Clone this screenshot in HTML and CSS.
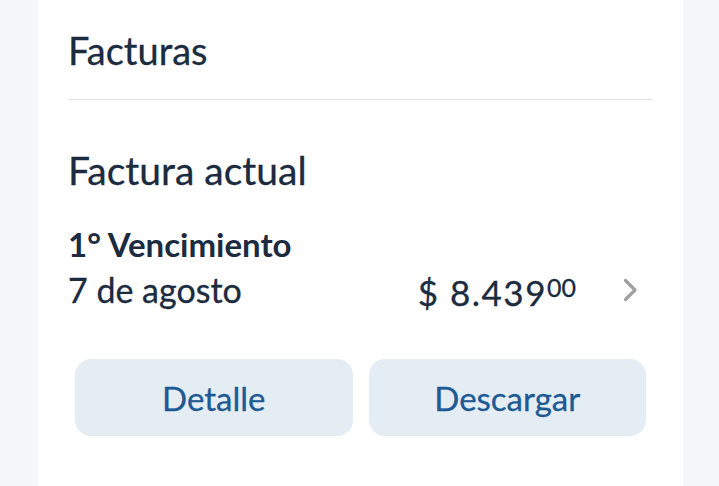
FILE: index.html
```html
<!DOCTYPE html>
<html lang="es">
<head>
    <meta charset="UTF-8">
    <meta name="viewport" content="width=device-width, initial-scale=1.0">
    <title>Facturas</title>
    <link rel="stylesheet" href="styles.css">
</head>
<body>
    <div class="card">
        <h1 class="title">Facturas</h1>
        <div class="divider"></div>

        <h2 class="subtitle">Factura actual</h2>
        <div class="due-label">1° Vencimiento</div>
        <div class="due-row">
            <span class="due-date">7 de agosto</span>
            <span class="amount">$ 8.439<span class="cents">00</span></span>
            <svg class="chevron" width="15" height="24" viewBox="0 0 15 24">
                <polyline points="2.5,2.5 12,12 2.5,21.5" fill="none" stroke="#a0a0a0" stroke-width="3.2" stroke-linecap="round" stroke-linejoin="round"/>
            </svg>
        </div>

        <div class="actions">
            <button class="btn">Detalle</button>
            <button class="btn">Descargar</button>
        </div>
    </div>
</body>
</html>
```

FILE: styles.css
```css
body {
    margin: 0;
    font-family: Lato, "Noto Sans", sans-serif;
    background: #f6f7f9;
    color: #1c2b40;
    height: 100vh;
    display: flex;
    -webkit-text-stroke: 0.3px currentColor;
}
.card {
    margin-left: 38px;
    width: 645px;
    background: #ffffff;
    padding: 27px 30px 0;
    box-sizing: border-box;
}
.title,
.subtitle {
    margin: 0;
    font-size: 38px;
    font-weight: 400;
    line-height: 46px;
}
.subtitle {
    font-size: 39px;
    margin-top: 47px;
}
.divider {
    height: 1px;
    background: #e2e4e7;
    margin-top: 26px;
}
.due-label {
    margin-top: 32px;
    font-size: 33px;
    font-weight: 700;
    line-height: 38px;
    -webkit-text-stroke: 0;
}
.due-row {
    margin-top: 5px;
    display: flex;
    align-items: center;
    line-height: 38px;
}
.due-date {
    font-size: 34px;
    flex: 1;
}
.amount {
    font-size: 35px;
    letter-spacing: 1.5px;
}
.cents {
    font-size: 25px;
    vertical-align: 9px;
    letter-spacing: 0;
}
.chevron {
    margin: 0 15px 0 47px;
}
.actions {
    display: flex;
    gap: 16px;
    margin: 48px 7px 0;
}
.btn {
    flex: 1;
    height: 77px;
    border: none;
    border-radius: 16px;
    background: #e4ecf4;
    color: #1d5a93;
    font-family: Lato, "Noto Sans", sans-serif;
    font-size: 33px;
    -webkit-text-stroke: 0.3px currentColor;
    cursor: pointer;
}
```
